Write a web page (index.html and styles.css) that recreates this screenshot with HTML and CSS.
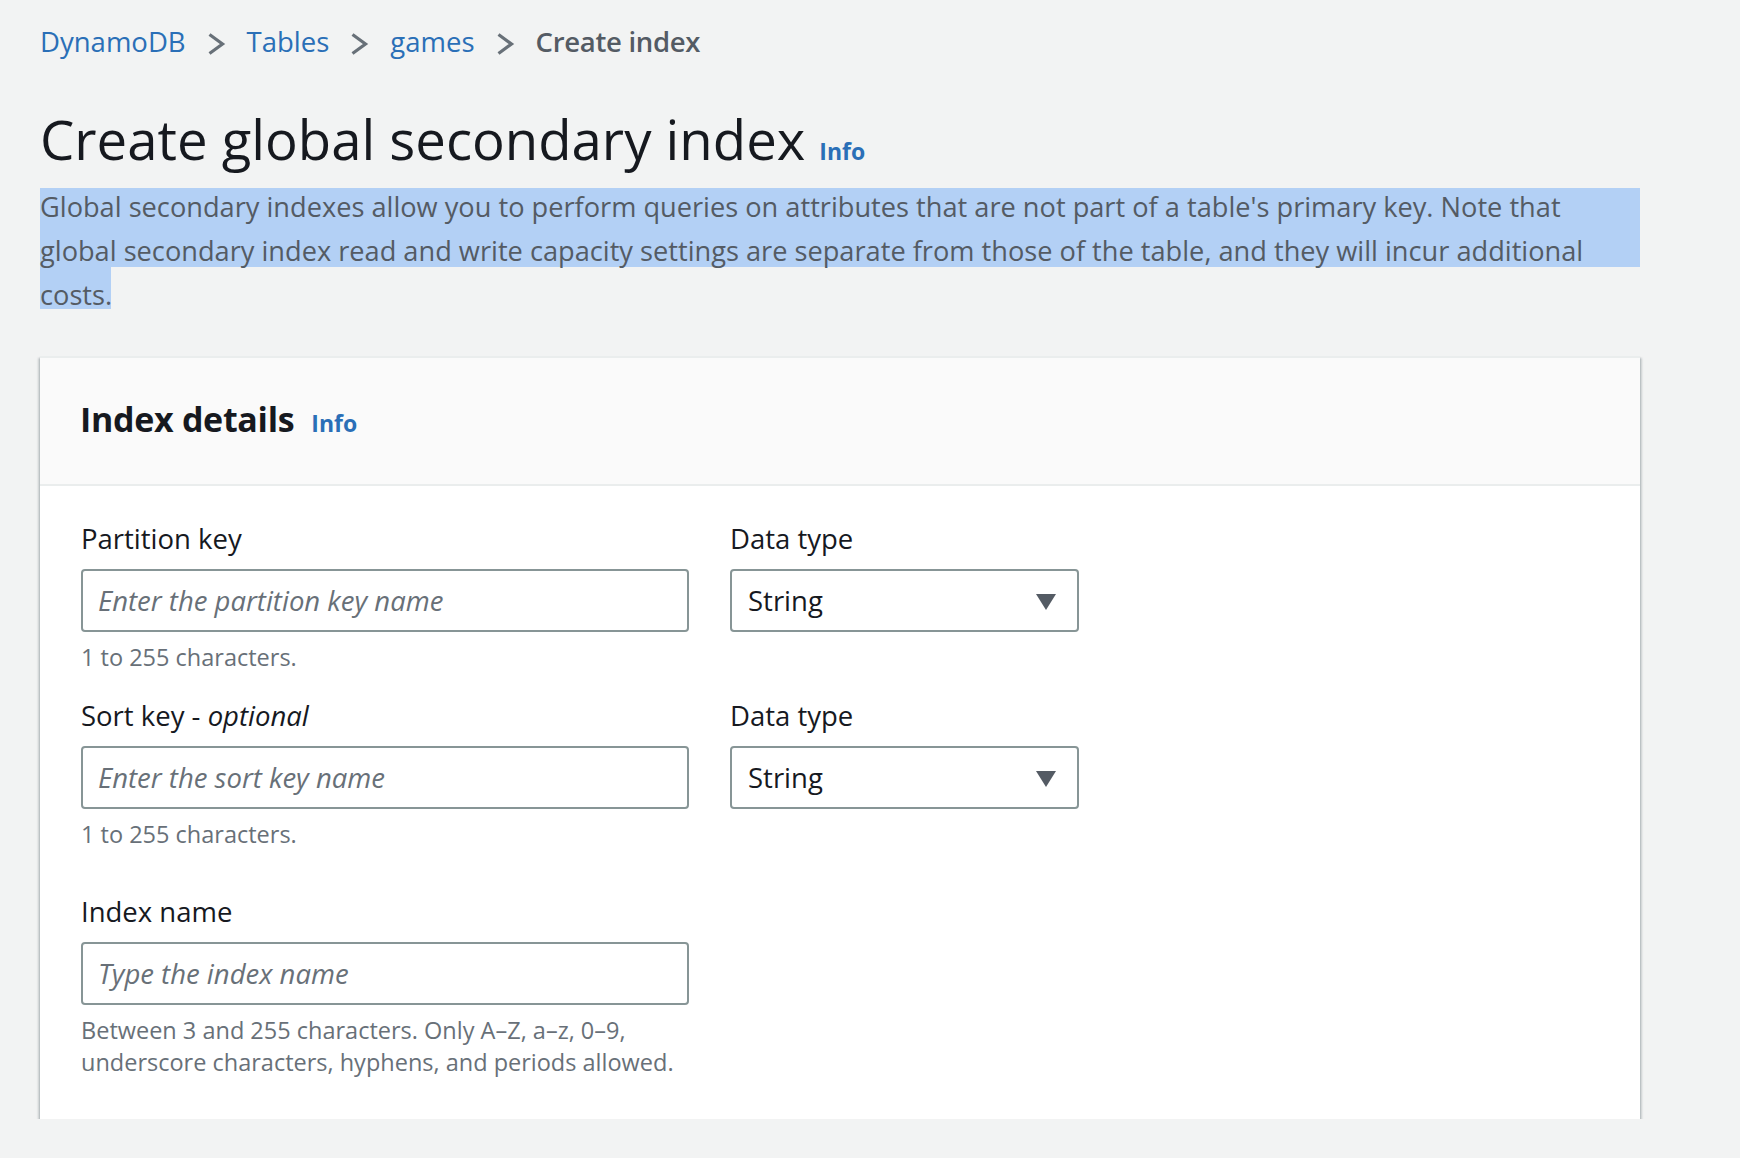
FILE: index.html
```html
<!DOCTYPE html>
<html lang="en">
<head>
<meta charset="utf-8">
<title>Create global secondary index</title>
<link rel="stylesheet" href="styles.css">
</head>
<body>
<div class="page">
  <nav class="crumbs">
    <a class="crumb-link" href="#">DynamoDB</a>
    <svg class="chev" viewBox="0 0 20 22" width="20" height="22"><polyline points="3.5,1.5 16.5,11 3.5,20.5"/></svg>
    <a class="crumb-link" href="#">Tables</a>
    <svg class="chev" viewBox="0 0 20 22" width="20" height="22"><polyline points="3.5,1.5 16.5,11 3.5,20.5"/></svg>
    <a class="crumb-link" href="#">games</a>
    <svg class="chev" viewBox="0 0 20 22" width="20" height="22"><polyline points="3.5,1.5 16.5,11 3.5,20.5"/></svg>
    <span class="crumb-current">Create index</span>
  </nav>

  <div class="title-row">
    <h1 class="title">Create global secondary index</h1>
    <a class="info" href="#">Info</a>
  </div>
  <p class="desc">Global secondary indexes allow you to perform queries on attributes that are not part of a table's primary key. Note that global secondary index read and write capacity settings are separate from those of the table, and they will incur additional costs.</p>

  <section class="card">
    <header class="card-header">
      <h2 class="card-title">Index details</h2>
      <a class="info" href="#">Info</a>
    </header>
    <div class="card-body">
      <div class="row">
        <div class="field field-key">
          <label class="label">Partition key</label>
          <input class="input" type="text" placeholder="Enter the partition key name">
          <div class="help">1 to 255 characters.</div>
        </div>
        <div class="field field-type">
          <label class="label">Data type</label>
          <div class="select"><span>String</span><svg class="caret" viewBox="0 0 20 16" width="20" height="16"><polygon points="0,0 20,0 10,16"/></svg></div>
        </div>
      </div>
      <div class="row">
        <div class="field field-key">
          <label class="label">Sort key - <i>optional</i></label>
          <input class="input" type="text" placeholder="Enter the sort key name">
          <div class="help">1 to 255 characters.</div>
        </div>
        <div class="field field-type">
          <label class="label">Data type</label>
          <div class="select"><span>String</span><svg class="caret" viewBox="0 0 20 16" width="20" height="16"><polygon points="0,0 20,0 10,16"/></svg></div>
        </div>
      </div>
      <div class="row row-last">
        <div class="field field-key">
          <label class="label">Index name</label>
          <input class="input" type="text" placeholder="Type the index name">
          <div class="help">Between 3 and 255 characters. Only A–Z, a–z, 0–9, underscore characters, hyphens, and periods allowed.</div>
        </div>
      </div>
    </div>
  </section>
</div>
</body>
</html>
```

FILE: styles.css
```css
* { box-sizing: border-box; }
html, body { margin: 0; padding: 0; }
body {
  background: #f2f3f3;
  font-family: "Open Sans", "Noto Sans", sans-serif;
  color: #16191f;
  font-size: 27.5px;
  line-height: 44px;
}
.page {
  padding: 20px 40px 0 40px;
  width: 1680px;
}
.crumbs {
  display: flex;
  align-items: center;
  height: 44px;
}
.crumb-link {
  color: #2a6fb7;
  text-decoration: none;
}
.chev {
  margin: 4px 21px 0 20px;
  fill: none;
  stroke: #687078;
  stroke-width: 3.2;
  stroke-linecap: butt;
  stroke-linejoin: miter;
}
.crumb-current {
  color: #545b64;
  font-weight: 600;
  letter-spacing: -0.3px;
}
.title-row {
  display: flex;
  align-items: baseline;
  gap: 14px;
  margin-top: 43px;
}
.title {
  margin: 0;
  font-size: 54.5px;
  line-height: 64px;
  font-weight: 400;
  color: #16191f;
}
.info {
  color: #2a6fb7;
  font-weight: 700;
  font-size: 23px;
  text-decoration: none;
}
.desc {
  margin: 12px 0 0 0;
  width: 1600px;
  font-size: 27.2px;
  color: #545b64;
  line-height: 44px;
  background:
    linear-gradient(#b3d0f5, #b3d0f5) 0 3px / 100% 79px no-repeat,
    linear-gradient(#b3d0f5, #b3d0f5) 0 82px / 71px 42px no-repeat;
}
.card {
  margin-top: 39px;
  width: 1600px;
  background: #ffffff;
  border-top: 2px solid #eaeded;
  box-shadow: 0 2px 2px 0 rgba(0, 28, 36, 0.3), 2px 2px 2px 0 rgba(0, 28, 36, 0.15), -2px 2px 2px 0 rgba(0, 28, 36, 0.15);
}
.card-header {
  display: flex;
  align-items: baseline;
  gap: 17px;
  background: #fafafa;
  padding: 37px 40px 39px 40px;
  border-bottom: 2px solid #eaeded;
}
.card-title {
  margin: 0;
  font-size: 34px;
  line-height: 48px;
  font-weight: 700;
  letter-spacing: -0.3px;
}
.card-body {
  padding: 31px 40px 41px 41px;
  display: flex;
  flex-direction: column;
  gap: 21px;
}
.row {
  display: flex;
  gap: 41px;
}
.row-last {
  margin-top: 19px;
}
.field {
  display: flex;
  flex-direction: column;
}
.field-key { width: 608px; }
.field-type { width: 349px; }
.label {
  display: block;
  line-height: 44px;
  margin-bottom: 8px;
  color: #16191f;
}
.input, .select {
  height: 63px;
  border: 2px solid #879596;
  border-radius: 4px;
  background: #ffffff;
  font-family: "Open Sans", "Noto Sans", sans-serif;
  font-size: 27.5px;
  color: #16191f;
  padding: 0 16px 0 15px;
}
.input { width: 608px; outline: none; }
.input::placeholder {
  color: #687078;
  font-style: italic;
  opacity: 1;
}
.select {
  display: flex;
  align-items: center;
  justify-content: space-between;
  padding: 0 21px 0 16px;
}
.caret { fill: #545b64; margin-top: 2px; }
.help {
  margin-top: 9px;
  font-size: 23.5px;
  line-height: 32px;
  color: #687078;
}
```
